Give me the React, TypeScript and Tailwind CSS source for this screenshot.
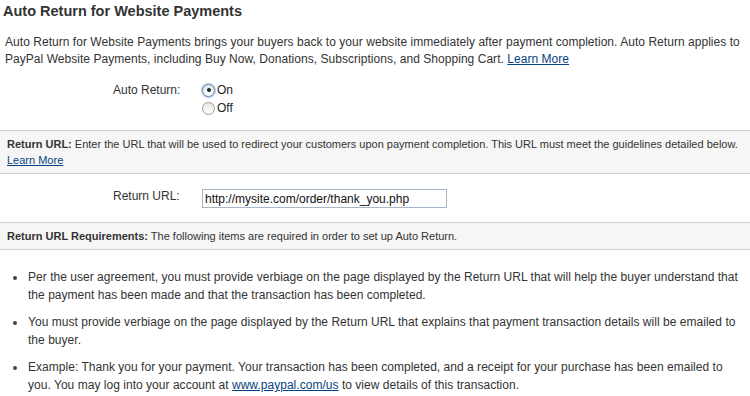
import React from "react";

function Radio({ checked, label }: { checked?: boolean; label: string }) {
  return (
    <label className="flex items-center h-[18px] gap-[2px]">
      <span
        className={
          "flex items-center justify-center w-[13px] h-[13px] rounded-full border bg-gradient-to-b from-[#e6e6e6] to-white " +
          (checked ? "border-[#5b87b3] shadow-[0_0_1px_1px_#a9c7e8]" : "border-[#9a9a9a]")
        }
      >
        {checked && <span className="w-[4px] h-[4px] rounded-full bg-[#222]" />}
      </span>
      <span className="text-[12px] text-[#222]">{label}</span>
    </label>
  );
}

function Notice({ title, children }: { title: string; children: React.ReactNode }) {
  return (
    <div className="border-y border-[#cfcfcf] bg-[#f6f6f6] px-[7px] py-[5px] text-[11px] leading-[16px] text-[#333]">
      <span className="font-bold">{title}</span> {children}
    </div>
  );
}

const requirements: React.ReactNode[] = [
  "Per the user agreement, you must provide verbiage on the page displayed by the Return URL that will help the buyer understand that the payment has been made and that the transaction has been completed.",
  "You must provide verbiage on the page displayed by the Return URL that explains that payment transaction details will be emailed to the buyer.",
  <>
    Example: Thank you for your payment. Your transaction has been completed, and a receipt for your purchase has been emailed to
    you. You may log into your account at{" "}
    <a href="#" className="text-[#084482] underline">
      www.paypal.com/us
    </a>{" "}
    to view details of this transaction.
  </>,
];

export default function App() {
  return (
    <div className="w-[750px] h-[396px] overflow-hidden bg-white text-[#333] font-['Liberation_Sans',Arial,sans-serif]">
      <h2 className="mt-[1px] px-[3px] text-[14.5px] leading-[20px] font-bold">Auto Return for Website Payments</h2>
      <p className="mt-[13px] px-[5px] text-[12px] leading-[17px] tracking-[0.04px]">
        Auto Return for Website Payments brings your buyers back to your website immediately after payment completion. Auto
        Return applies to PayPal Website Payments, including Buy Now, Donations, Subscriptions, and Shopping Cart.{" "}
        <a href="#" className="text-[#084482] underline">
          Learn More
        </a>
      </p>

      <div className="flex mt-[13px] mb-[13px] pl-[113px]">
        <span className="w-[89px] text-[12px] leading-[18px]">Auto Return:</span>
        <div className="flex flex-col">
          <Radio checked label="On" />
          <Radio label="Off" />
        </div>
      </div>

      <Notice title="Return URL:">
        Enter the URL that will be used to redirect your customers upon payment completion. This URL must meet the guidelines
        detailed below.{" "}
        <a href="#" className="text-[#084482] underline">
          Learn More
        </a>
      </Notice>

      <div className="flex items-center mt-[15px] mb-[14px] pl-[113px]">
        <span className="w-[89px] text-[12px] leading-[18px] -mt-[5px]">Return URL:</span>
        <input
          readOnly
          value="http://mysite.com/order/thank_you.php"
          className="w-[245px] h-[19px] border border-[#a7b7c7] px-[2px] text-[12px] text-[#111] outline-none"
        />
      </div>

      <Notice title="Return URL Requirements:">The following items are required in order to set up Auto Return.</Notice>

      <ul className="mt-[18px] flex flex-col gap-[9px] text-[12px] leading-[18px] tracking-[0.03px]">
        {requirements.map((item, i) => (
          <li key={i} className="flex pr-[6px]">
            <span className="w-[28px] shrink-0 flex justify-center pl-[1px] pt-[8px]">
              <span className="w-[4px] h-[4px] rounded-full bg-[#444]" />
            </span>
            <span>{item}</span>
          </li>
        ))}
      </ul>
    </div>
  );
}
